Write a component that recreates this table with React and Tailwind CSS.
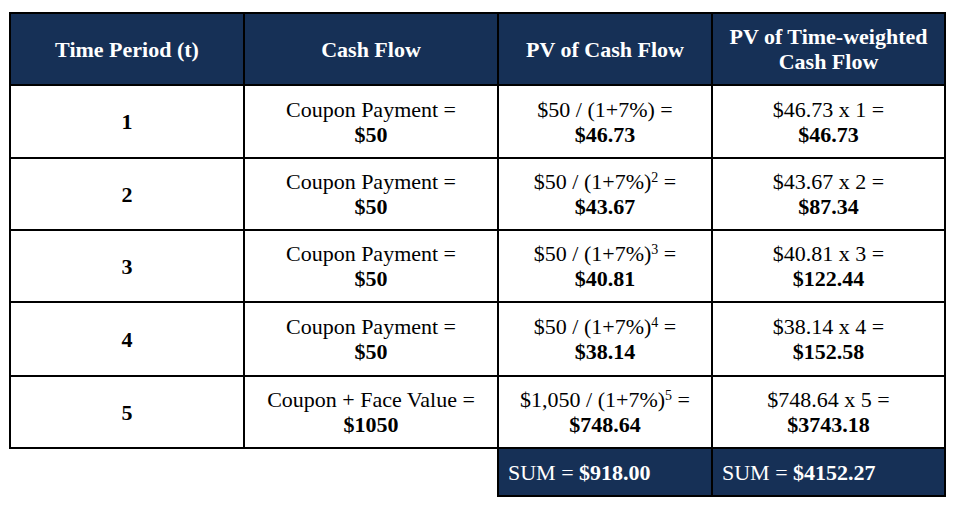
import React from "react";

const rows = [
  { t: "1", cf: "Coupon Payment =", cfv: "$50", pv: "$50 / (1+7%)", exp: "", pvv: "$46.73", tw: "$46.73 x 1 =", twv: "$46.73" },
  { t: "2", cf: "Coupon Payment =", cfv: "$50", pv: "$50 / (1+7%)", exp: "2", pvv: "$43.67", tw: "$43.67 x 2 =", twv: "$87.34" },
  { t: "3", cf: "Coupon Payment =", cfv: "$50", pv: "$50 / (1+7%)", exp: "3", pvv: "$40.81", tw: "$40.81 x 3 =", twv: "$122.44" },
  { t: "4", cf: "Coupon Payment =", cfv: "$50", pv: "$50 / (1+7%)", exp: "4", pvv: "$38.14", tw: "$38.14 x 4 =", twv: "$152.58" },
  { t: "5", cf: "Coupon + Face Value =", cfv: "$1050", pv: "$1,050 / (1+7%)", exp: "5", pvv: "$748.64", tw: "$748.64 x 5 =", twv: "$3743.18" },
];

const heights = ["h-[73px]", "h-[72px]", "h-[72px]", "h-[74px]", "h-[72px]"];

export default function App() {
  return (
    <div
      className="w-[956px] h-[506px] bg-white pt-[12px] pl-[9px] text-black"
      style={{ fontFamily: '"Liberation Serif", "Times New Roman", serif' }}
    >
      <table className="border-collapse text-[22px] leading-[25px]">
        <colgroup>
          <col className="w-[234px]" />
          <col className="w-[254px]" />
          <col className="w-[214px]" />
          <col className="w-[233px]" />
        </colgroup>
        <thead>
          <tr className="h-[72px] bg-[#163056] text-white font-bold">
            <th className="border-2 border-black text-center align-middle">Time Period (t)</th>
            <th className="border-2 border-black text-center align-middle">Cash Flow</th>
            <th className="border-2 border-black text-center align-middle">PV of Cash Flow</th>
            <th className="border-2 border-black text-center align-middle">
              PV of Time-weighted
              <br />
              Cash Flow
            </th>
          </tr>
        </thead>
        <tbody>
          {rows.map((r, i) => (
            <tr key={r.t} className={heights[i]}>
              <td className="border-2 border-black text-center align-middle font-bold">{r.t}</td>
              <td className="border-2 border-black text-center align-middle">
                <div>{r.cf}</div>
                <div className="font-bold">{r.cfv}</div>
              </td>
              <td className="border-2 border-black text-center align-middle">
                <div>
                  {r.pv}
                  {r.exp && <sup className="text-[14px] relative -top-[7px]">{r.exp}</sup>} =
                </div>
                <div className="font-bold">{r.pvv}</div>
              </td>
              <td className="border-2 border-black text-center align-middle">
                <div>{r.tw}</div>
                <div className="font-bold">{r.twv}</div>
              </td>
            </tr>
          ))}
          <tr className="h-[48px]">
            <td className="border-0" />
            <td className="border-0 border-t-2 border-black" />
            <td className="border-2 border-black bg-[#163056] text-white text-left align-middle pl-[9px]">
              SUM = <span className="font-bold">$918.00</span>
            </td>
            <td className="border-2 border-black bg-[#163056] text-white text-left align-middle pl-[9px]">
              SUM = <span className="font-bold">$4152.27</span>
            </td>
          </tr>
        </tbody>
      </table>
    </div>
  );
}
